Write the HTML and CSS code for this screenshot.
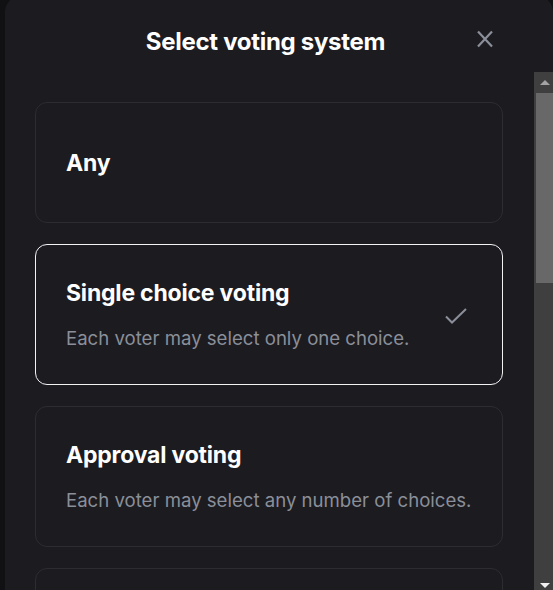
FILE: index.html
```html
<!DOCTYPE html>
<html lang="en">
<head>
<meta charset="utf-8">
<title>Select voting system</title>
<link rel="stylesheet" href="styles.css">
</head>
<body>
<div class="backdrop">
  <div class="modal">
    <div class="header">
      <h2 class="title">Select voting system</h2>
      <button class="close" aria-label="Close">
        <svg width="16" height="18" viewBox="0 0 16 18"><path d="M1 1.5 L15 16.5 M15 1.5 L1 16.5" stroke="currentColor" stroke-width="2.2" fill="none"/></svg>
      </button>
    </div>
    <div class="body">
      <div class="content">
        <div class="card card-short">
          <div class="card-text">
            <div class="card-title">Any</div>
          </div>
        </div>
        <div class="card card-selected">
          <div class="card-text">
            <div class="card-title">Single choice voting</div>
            <div class="card-desc">Each voter may select only one choice.</div>
          </div>
          <svg class="check" width="22" height="17" viewBox="0 0 22 17"><path d="M1 8.5 L7 14.5 L21 1" stroke="currentColor" stroke-width="2" fill="none"/></svg>
        </div>
        <div class="card">
          <div class="card-text">
            <div class="card-title">Approval voting</div>
            <div class="card-desc">Each voter may select any number of choices.</div>
          </div>
        </div>
        <div class="card"></div>
      </div>
      <div class="scrollbar">
        <div class="sb-btn"><span class="arrow-up"></span></div>
        <div class="sb-thumb"></div>
        <div class="sb-track"></div>
        <div class="sb-btn sb-btn-down"><span class="arrow-down"></span></div>
      </div>
    </div>
  </div>
</div>
</body>
</html>
```
FILE: styles.css
```css
* { box-sizing: border-box; }
html, body {
  margin: 0;
  height: 590px;
  overflow: hidden;
  background: #111113;
  font-family: "Inter", "Noto Sans", sans-serif;
}
.backdrop {
  height: 590px;
  padding-left: 5px;
  display: flex;
}
.modal {
  flex: 1;
  height: 594px;
  margin-top: -4px;
  background: #1c1b20;
  border-radius: 16px 16px 0 0;
  display: flex;
  flex-direction: column;
  overflow: hidden;
}
.header {
  height: 76px;
  flex: none;
  display: flex;
  align-items: center;
  padding: 16px 60px 0 49px;
}
.title {
  flex: 1;
  margin: 0;
  text-align: center;
  color: #ffffff;
  font-size: 24px;
  font-weight: 700;
  letter-spacing: -0.3px;
  line-height: 28px;
}
.close {
  flex: none;
  background: none;
  border: 0;
  padding: 0;
  width: 16px;
  height: 18px;
  margin-top: -6px;
  color: #8b8f99;
  display: flex;
}
.body {
  flex: 1;
  display: flex;
  min-height: 0;
}
.content {
  flex: 1;
  padding: 30px 31px 0 30px;
  display: flex;
  flex-direction: column;
  gap: 21px;
  overflow: hidden;
}
.card {
  flex: none;
  height: 141px;
  border: 1px solid #2c2c31;
  border-radius: 12px;
  padding: 0 35px 0 30px;
  display: flex;
  align-items: center;
  justify-content: space-between;
}
.card-short { height: 121px; }
.card-selected { border-color: #f2f2f2; }
.card-text {
  flex: 1;
  min-width: 0;
  white-space: nowrap;
  display: flex;
  flex-direction: column;
  gap: 19px;
}
.card-title {
  color: #ffffff;
  font-size: 23px;
  font-weight: 700;
  line-height: 28px;
  letter-spacing: -0.2px;
}
.card-desc {
  color: #8a8f99;
  font-size: 18.6px;
  line-height: 24px;
}
.check {
  flex: none;
  color: #8a8f99;
  margin-top: 4px;
}
.scrollbar {
  width: 19px;
  flex: none;
  background: #3f3f3f;
  display: flex;
  flex-direction: column;
}
.sb-btn {
  height: 21px;
  flex: none;
  display: flex;
  align-items: center;
  justify-content: center;
  padding-left: 2px;
}
.sb-btn-down {
  align-items: flex-end;
  padding-bottom: 2px;
}
.arrow-up {
  width: 0; height: 0;
  border-left: 5px solid transparent;
  border-right: 5px solid transparent;
  border-bottom: 5px solid #a3a3a3;
}
.arrow-down {
  width: 0; height: 0;
  border-left: 5px solid transparent;
  border-right: 5px solid transparent;
  border-top: 5px solid #f0f0f0;
}
.sb-thumb {
  height: 190px;
  flex: none;
  margin-left: 2px;
  background: #686868;
}
.sb-track { flex: 1; }
```
